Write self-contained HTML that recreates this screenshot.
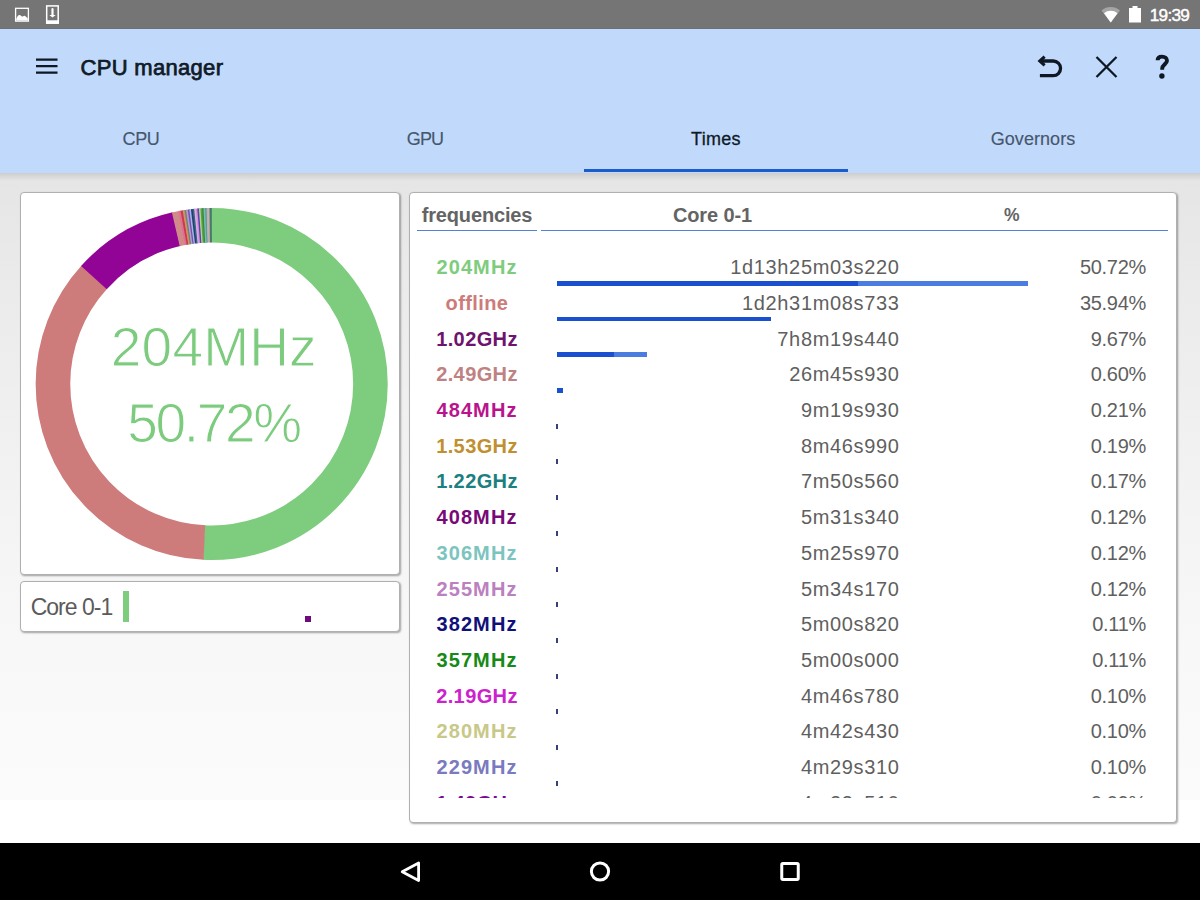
<!DOCTYPE html>
<html><head><meta charset="utf-8"><style>
html,body{margin:0;padding:0;width:1200px;height:900px;overflow:hidden;background:#fff;}
body{position:relative;font-family:"Liberation Sans",sans-serif;}
.t{position:absolute;white-space:nowrap;}
.abs{position:absolute;}
</style></head><body>

<div class="abs" style="left:0;top:0;width:1200px;height:28px;background:#757575"></div>
<div class="abs" style="left:0;top:28px;width:1200px;height:145px;background:#c1dafc"></div>
<div class="abs" style="left:0;top:28px;width:1200px;height:1px;background:#66727c"></div>
<div class="abs" style="left:0;top:173px;width:1200px;height:627px;background:linear-gradient(#e5e5e5 0px,#ebebeb 120px,#f2f2f2 300px,#f8f8f8 470px,#fbfbfb 627px)"></div>
<div class="abs" style="left:0;top:173px;width:1200px;height:8px;background:linear-gradient(rgba(0,0,0,0.10),rgba(0,0,0,0))"></div>
<div class="abs" style="left:0;top:843px;width:1200px;height:57px;background:#000"></div>
<div class="abs" style="left:584px;top:169px;width:264px;height:3px;background:#1a5cc9"></div>
<svg class="abs" style="left:0;top:0" width="1200" height="28">
<rect x="15.6" y="8.3" width="12.8" height="12.8" fill="none" stroke="#fff" stroke-width="1.3"/>
<path d="M16.3 20.5 L16.3 19 C17 17 18 15 19.6 15 C20.8 15 21.2 16.6 22.2 16.6 C23 16.6 23.5 15.8 24.3 15.8 C25.5 15.8 26.5 17.5 27.7 18 L27.7 20.5 Z" fill="#fff"/>
<rect x="46.7" y="5.9" width="11.5" height="17.2" fill="none" stroke="#fff" stroke-width="1.5"/>
<rect x="46" y="20.3" width="13" height="3.5" fill="#fff"/>
<path d="M52.5 9 V15" stroke="#fff" stroke-width="2.2" stroke-linecap="round"/>
<path d="M49.3 15 L55.7 15 L52.5 17.6 Z" fill="#fff"/>
<path d="M1101.5 10.5 A14 14 0 0 1 1120 10.5 L1110.75 22.5 Z" fill="rgba(255,255,255,0.35)"/>
<path d="M1104 13.2 A10.5 10.5 0 0 1 1117.5 13.2 L1110.75 22.5 Z" fill="#fff"/>
<rect x="1129" y="8" width="12" height="14.5" fill="#fff"/>
<rect x="1132.5" y="6" width="5" height="2.5" fill="#fff"/>
</svg>
<div class="t" style="left:1149.8px;top:5.12px;font-size:17.2px;line-height:20.64px;color:#fff;font-weight:400;letter-spacing:-0.75px;-webkit-text-stroke:0.45px #fff;">19:39</div>
<svg class="abs" style="left:0;top:28px" width="1200" height="60">
<g stroke="#0f1722" stroke-width="2.2">
<path d="M36 31.6 H57.5 M36 38.1 H57.5 M36 44.6 H57.5"/>
</g>
</svg>
<div class="t" style="left:80.6px;top:54.68px;font-size:22px;line-height:26.40px;color:#111a26;font-weight:400;letter-spacing:0.3px;-webkit-text-stroke:0.75px #111a26;">CPU manager</div>
<svg class="abs" style="left:1020px;top:40px" width="170" height="50">
<g fill="none" stroke="#0f1722">
<path d="M19.9 35.7 H33.2 A7.35 7.35 0 0 0 33.2 21 H20.5" stroke-width="3.3"/>
<path d="M24.6 16.6 L19.8 21 L24.6 25.4" stroke-width="3.1"/>
<path d="M76.5 17 L96.5 37 M96.5 17 L76.5 37" stroke-width="2.3"/>
<path d="M137.6 20.3 C137.6 17.6 139.3 16.6 142 16.6 C145 16.6 147 18.3 147 20.8 C147 23.6 142.2 25 142.2 28.4 V29.7" stroke-width="3.9"/>
</g>
<circle cx="141.9" cy="36" r="2.7" fill="#0f1722"/>
</svg>
<div class="t" style="left:-159px;width:600px;text-align:center;top:128.66px;font-size:18px;line-height:21.60px;color:#46566c;font-weight:400;letter-spacing:-0.3px;-webkit-text-stroke:0.15px #46566c;">CPU</div>
<div class="t" style="left:125px;width:600px;text-align:center;top:128.66px;font-size:18px;line-height:21.60px;color:#46566c;font-weight:400;letter-spacing:-0.8px;-webkit-text-stroke:0.15px #46566c;">GPU</div>
<div class="t" style="left:416px;width:600px;text-align:center;top:128.66px;font-size:18px;line-height:21.60px;color:#0f1a28;font-weight:400;letter-spacing:0.3px;-webkit-text-stroke:0.3px #0f1a28;">Times</div>
<div class="t" style="left:733px;width:600px;text-align:center;top:128.66px;font-size:18px;line-height:21.60px;color:#46566c;font-weight:400;letter-spacing:0.05px;-webkit-text-stroke:0.15px #46566c;">Governors</div>
<div class="abs" style="left:20px;top:192px;width:380px;height:383px;box-sizing:border-box;border:1px solid #b0b0b0;border-radius:4px;background:#fff;box-shadow:1px 1px 2px rgba(0,0,0,0.35)"></div>
<div class="abs" style="left:20px;top:581px;width:380px;height:51px;box-sizing:border-box;border:1px solid #b0b0b0;border-radius:4px;background:#fff;box-shadow:1px 1px 2px rgba(0,0,0,0.35)"></div>
<div class="abs" style="left:409px;top:192px;width:768px;height:631px;box-sizing:border-box;border:1px solid #b0b0b0;border-radius:4px;background:#fff;box-shadow:1px 1px 2px rgba(0,0,0,0.35)"></div>
<svg class="abs" style="left:0;top:0" width="1200" height="900"><g transform="rotate(-90 211.7 384)"><circle cx="211.7" cy="384" r="158.75" fill="none" stroke="#7ecc7e" stroke-width="34.6" stroke-dasharray="506.510 997.456" stroke-dashoffset="0.000"/><circle cx="211.7" cy="384" r="158.75" fill="none" stroke="#cd7b7b" stroke-width="34.6" stroke-dasharray="359.086 997.456" stroke-dashoffset="-505.910"/><circle cx="211.7" cy="384" r="158.75" fill="none" stroke="#920496" stroke-width="34.6" stroke-dasharray="97.054 997.456" stroke-dashoffset="-864.395"/><circle cx="211.7" cy="384" r="158.75" fill="none" stroke="#d08a8a" stroke-width="34.6" stroke-dasharray="6.488 997.456" stroke-dashoffset="-960.849"/><circle cx="211.7" cy="384" r="158.75" fill="none" stroke="#e07090" stroke-width="34.6" stroke-dasharray="2.661 997.456" stroke-dashoffset="-966.738"/><circle cx="211.7" cy="384" r="158.75" fill="none" stroke="#c83a50" stroke-width="34.6" stroke-dasharray="2.465 997.456" stroke-dashoffset="-968.798"/><circle cx="211.7" cy="384" r="158.75" fill="none" stroke="#d89060" stroke-width="34.6" stroke-dasharray="2.268 997.456" stroke-dashoffset="-970.663"/><circle cx="211.7" cy="384" r="158.75" fill="none" stroke="#6a8a6a" stroke-width="34.6" stroke-dasharray="2.072 997.456" stroke-dashoffset="-972.332"/><circle cx="211.7" cy="384" r="158.75" fill="none" stroke="#b898d8" stroke-width="34.6" stroke-dasharray="2.072 997.456" stroke-dashoffset="-973.804"/><circle cx="211.7" cy="384" r="158.75" fill="none" stroke="#7a50b0" stroke-width="34.6" stroke-dasharray="2.072 997.456" stroke-dashoffset="-975.276"/><circle cx="211.7" cy="384" r="158.75" fill="none" stroke="#a0b8e8" stroke-width="34.6" stroke-dasharray="2.072 997.456" stroke-dashoffset="-976.748"/><circle cx="211.7" cy="384" r="158.75" fill="none" stroke="#2a3a70" stroke-width="34.6" stroke-dasharray="2.072 997.456" stroke-dashoffset="-978.220"/><circle cx="211.7" cy="384" r="158.75" fill="none" stroke="#2a6a80" stroke-width="34.6" stroke-dasharray="2.072 997.456" stroke-dashoffset="-979.692"/><circle cx="211.7" cy="384" r="158.75" fill="none" stroke="#e0a8e8" stroke-width="34.6" stroke-dasharray="2.072 997.456" stroke-dashoffset="-981.164"/><circle cx="211.7" cy="384" r="158.75" fill="none" stroke="#d090d8" stroke-width="34.6" stroke-dasharray="1.974 997.456" stroke-dashoffset="-982.636"/><circle cx="211.7" cy="384" r="158.75" fill="none" stroke="#6040b0" stroke-width="34.6" stroke-dasharray="2.072 997.456" stroke-dashoffset="-984.010"/><circle cx="211.7" cy="384" r="158.75" fill="none" stroke="#a8d890" stroke-width="34.6" stroke-dasharray="1.974 997.456" stroke-dashoffset="-985.482"/><circle cx="211.7" cy="384" r="158.75" fill="none" stroke="#60a040" stroke-width="34.6" stroke-dasharray="1.974 997.456" stroke-dashoffset="-986.856"/><circle cx="211.7" cy="384" r="158.75" fill="none" stroke="#3a8a3a" stroke-width="34.6" stroke-dasharray="1.974 997.456" stroke-dashoffset="-988.230"/><circle cx="211.7" cy="384" r="158.75" fill="none" stroke="#70c0b0" stroke-width="34.6" stroke-dasharray="1.974 997.456" stroke-dashoffset="-989.604"/><circle cx="211.7" cy="384" r="158.75" fill="none" stroke="#50a0a0" stroke-width="34.6" stroke-dasharray="1.974 997.456" stroke-dashoffset="-990.978"/><circle cx="211.7" cy="384" r="158.75" fill="none" stroke="#d0a8a8" stroke-width="34.6" stroke-dasharray="1.974 997.456" stroke-dashoffset="-992.352"/><circle cx="211.7" cy="384" r="158.75" fill="none" stroke="#c8b0b0" stroke-width="34.6" stroke-dasharray="1.876 997.456" stroke-dashoffset="-993.726"/><circle cx="211.7" cy="384" r="158.75" fill="none" stroke="#4a7a6a" stroke-width="34.6" stroke-dasharray="1.876 997.456" stroke-dashoffset="-995.002"/><circle cx="211.7" cy="384" r="158.75" fill="none" stroke="#2a7a5a" stroke-width="34.6" stroke-dasharray="1.778 997.456" stroke-dashoffset="-996.278"/></g></svg>
<div class="t" style="left:-86.19999999999999px;width:600px;text-align:center;top:314.14px;font-size:55px;line-height:66.00px;color:#7dcb7e;font-weight:400;letter-spacing:0.2px;-webkit-text-stroke:1px #fff;">204MHz</div>
<div class="t" style="left:-86.5px;width:600px;text-align:center;top:390.24px;font-size:55px;line-height:66.00px;color:#7dcb7e;font-weight:400;letter-spacing:-2.3px;-webkit-text-stroke:1px #fff;">50.72%</div>
<div class="t" style="left:30.7px;top:593.83px;font-size:23px;line-height:27.60px;color:#5b5b5b;font-weight:400;letter-spacing:-1.0px;">Core 0-1</div>
<div class="abs" style="left:123px;top:591px;width:6px;height:31px;background:#7ecc7e"></div>
<div class="abs" style="left:305px;top:616px;width:6px;height:6px;background:#6e0a7a"></div>
<div class="t" style="left:177px;width:600px;text-align:center;top:202.77px;font-size:20px;line-height:24.00px;color:#646464;font-weight:700;letter-spacing:-0.15px;">frequencies</div>
<div class="t" style="left:412.5px;width:600px;text-align:center;top:203.07px;font-size:20px;line-height:24.00px;color:#646464;font-weight:700;letter-spacing:-0.1px;">Core 0-1</div>
<div class="t" style="left:711.7px;width:600px;text-align:center;top:205.14px;font-size:17.5px;line-height:21.00px;color:#646464;font-weight:700;letter-spacing:0px;">%</div>
<div class="abs" style="left:417px;top:230px;width:120px;height:1.2px;background:#5580d8"></div>
<div class="abs" style="left:541px;top:230px;width:627px;height:1.2px;background:#5580d8"></div>
<div class="abs" style="left:410px;top:240px;width:766px;height:557.6px;overflow:hidden">
<div class="t" style="left:-233px;width:600px;text-align:center;top:15.07px;font-size:20px;line-height:24.00px;color:#7ecc7e;font-weight:700;letter-spacing:1.1px;">204MHz</div>
<div class="t" style="right:276.5px;text-align:right;top:15.07px;font-size:20px;line-height:24.00px;color:#5f5f5f;font-weight:400;letter-spacing:0.65px;">1d13h25m03s220</div>
<div class="t" style="right:30px;text-align:right;top:15.07px;font-size:20px;line-height:24.00px;color:#5f5f5f;font-weight:400;letter-spacing:-0.3px;">50.72%</div>
<div class="abs" style="left:146.5px;top:41.00px;width:471px;height:4.5px;background:#4a7ddf"></div>
<div class="abs" style="left:146.5px;top:41.00px;width:301px;height:4.5px;background:#1a4fcf"></div>
<div class="t" style="left:-233px;width:600px;text-align:center;top:50.78px;font-size:20px;line-height:24.00px;color:#cd7b7b;font-weight:700;letter-spacing:0.4px;">offline</div>
<div class="t" style="right:276.5px;text-align:right;top:50.78px;font-size:20px;line-height:24.00px;color:#5f5f5f;font-weight:400;letter-spacing:0.65px;">1d2h31m08s733</div>
<div class="t" style="right:30px;text-align:right;top:50.78px;font-size:20px;line-height:24.00px;color:#5f5f5f;font-weight:400;letter-spacing:-0.3px;">35.94%</div>
<div class="abs" style="left:146.5px;top:76.71px;width:214px;height:4.5px;background:#1a4fcf"></div>
<div class="t" style="left:-233px;width:600px;text-align:center;top:86.50px;font-size:20px;line-height:24.00px;color:#6e146e;font-weight:700;letter-spacing:0.4px;">1.02GHz</div>
<div class="t" style="right:276.5px;text-align:right;top:86.50px;font-size:20px;line-height:24.00px;color:#5f5f5f;font-weight:400;letter-spacing:0.65px;">7h8m19s440</div>
<div class="t" style="right:30px;text-align:right;top:86.50px;font-size:20px;line-height:24.00px;color:#5f5f5f;font-weight:400;letter-spacing:-0.3px;">9.67%</div>
<div class="abs" style="left:146.5px;top:112.43px;width:90.5px;height:4.5px;background:#4a7ddf"></div>
<div class="abs" style="left:146.5px;top:112.43px;width:57.5px;height:4.5px;background:#1a4fcf"></div>
<div class="t" style="left:-233px;width:600px;text-align:center;top:122.21px;font-size:20px;line-height:24.00px;color:#be8282;font-weight:700;letter-spacing:0.4px;">2.49GHz</div>
<div class="t" style="right:276.5px;text-align:right;top:122.21px;font-size:20px;line-height:24.00px;color:#5f5f5f;font-weight:400;letter-spacing:0.65px;">26m45s930</div>
<div class="t" style="right:30px;text-align:right;top:122.21px;font-size:20px;line-height:24.00px;color:#5f5f5f;font-weight:400;letter-spacing:-0.3px;">0.60%</div>
<div class="abs" style="left:146.5px;top:148.14px;width:6px;height:4.5px;background:#1a4fcf"></div>
<div class="t" style="left:-233px;width:600px;text-align:center;top:157.93px;font-size:20px;line-height:24.00px;color:#b9148c;font-weight:700;letter-spacing:1.1px;">484MHz</div>
<div class="t" style="right:276.5px;text-align:right;top:157.93px;font-size:20px;line-height:24.00px;color:#5f5f5f;font-weight:400;letter-spacing:0.65px;">9m19s930</div>
<div class="t" style="right:30px;text-align:right;top:157.93px;font-size:20px;line-height:24.00px;color:#5f5f5f;font-weight:400;letter-spacing:-0.3px;">0.21%</div>
<div class="abs" style="left:146.20000000000005px;top:183.66px;width:2.2px;height:5px;background:#36407a"></div>
<div class="t" style="left:-233px;width:600px;text-align:center;top:193.64px;font-size:20px;line-height:24.00px;color:#c09030;font-weight:700;letter-spacing:0.4px;">1.53GHz</div>
<div class="t" style="right:276.5px;text-align:right;top:193.64px;font-size:20px;line-height:24.00px;color:#5f5f5f;font-weight:400;letter-spacing:0.65px;">8m46s990</div>
<div class="t" style="right:30px;text-align:right;top:193.64px;font-size:20px;line-height:24.00px;color:#5f5f5f;font-weight:400;letter-spacing:-0.3px;">0.19%</div>
<div class="abs" style="left:146.20000000000005px;top:219.37px;width:2.2px;height:5px;background:#36407a"></div>
<div class="t" style="left:-233px;width:600px;text-align:center;top:229.35px;font-size:20px;line-height:24.00px;color:#1a8080;font-weight:700;letter-spacing:0.4px;">1.22GHz</div>
<div class="t" style="right:276.5px;text-align:right;top:229.35px;font-size:20px;line-height:24.00px;color:#5f5f5f;font-weight:400;letter-spacing:0.65px;">7m50s560</div>
<div class="t" style="right:30px;text-align:right;top:229.35px;font-size:20px;line-height:24.00px;color:#5f5f5f;font-weight:400;letter-spacing:-0.3px;">0.17%</div>
<div class="abs" style="left:146.20000000000005px;top:255.08px;width:2px;height:5px;background:#36407a"></div>
<div class="t" style="left:-233px;width:600px;text-align:center;top:265.07px;font-size:20px;line-height:24.00px;color:#780a78;font-weight:700;letter-spacing:1.1px;">408MHz</div>
<div class="t" style="right:276.5px;text-align:right;top:265.07px;font-size:20px;line-height:24.00px;color:#5f5f5f;font-weight:400;letter-spacing:0.65px;">5m31s340</div>
<div class="t" style="right:30px;text-align:right;top:265.07px;font-size:20px;line-height:24.00px;color:#5f5f5f;font-weight:400;letter-spacing:-0.3px;">0.12%</div>
<div class="abs" style="left:146.20000000000005px;top:290.80px;width:2px;height:5px;background:#36407a"></div>
<div class="t" style="left:-233px;width:600px;text-align:center;top:300.78px;font-size:20px;line-height:24.00px;color:#7cc4c0;font-weight:700;letter-spacing:1.1px;">306MHz</div>
<div class="t" style="right:276.5px;text-align:right;top:300.78px;font-size:20px;line-height:24.00px;color:#5f5f5f;font-weight:400;letter-spacing:0.65px;">5m25s970</div>
<div class="t" style="right:30px;text-align:right;top:300.78px;font-size:20px;line-height:24.00px;color:#5f5f5f;font-weight:400;letter-spacing:-0.3px;">0.12%</div>
<div class="abs" style="left:146.20000000000005px;top:326.51px;width:2px;height:5px;background:#36407a"></div>
<div class="t" style="left:-233px;width:600px;text-align:center;top:336.50px;font-size:20px;line-height:24.00px;color:#bb80c0;font-weight:700;letter-spacing:1.1px;">255MHz</div>
<div class="t" style="right:276.5px;text-align:right;top:336.50px;font-size:20px;line-height:24.00px;color:#5f5f5f;font-weight:400;letter-spacing:0.65px;">5m34s170</div>
<div class="t" style="right:30px;text-align:right;top:336.50px;font-size:20px;line-height:24.00px;color:#5f5f5f;font-weight:400;letter-spacing:-0.3px;">0.12%</div>
<div class="abs" style="left:146.20000000000005px;top:362.23px;width:2px;height:5px;background:#36407a"></div>
<div class="t" style="left:-233px;width:600px;text-align:center;top:372.21px;font-size:20px;line-height:24.00px;color:#10107a;font-weight:700;letter-spacing:1.1px;">382MHz</div>
<div class="t" style="right:276.5px;text-align:right;top:372.21px;font-size:20px;line-height:24.00px;color:#5f5f5f;font-weight:400;letter-spacing:0.65px;">5m00s820</div>
<div class="t" style="right:30px;text-align:right;top:372.21px;font-size:20px;line-height:24.00px;color:#5f5f5f;font-weight:400;letter-spacing:-0.3px;">0.11%</div>
<div class="abs" style="left:146.20000000000005px;top:397.94px;width:2px;height:5px;background:#36407a"></div>
<div class="t" style="left:-233px;width:600px;text-align:center;top:407.92px;font-size:20px;line-height:24.00px;color:#168a16;font-weight:700;letter-spacing:1.1px;">357MHz</div>
<div class="t" style="right:276.5px;text-align:right;top:407.92px;font-size:20px;line-height:24.00px;color:#5f5f5f;font-weight:400;letter-spacing:0.65px;">5m00s000</div>
<div class="t" style="right:30px;text-align:right;top:407.92px;font-size:20px;line-height:24.00px;color:#5f5f5f;font-weight:400;letter-spacing:-0.3px;">0.11%</div>
<div class="abs" style="left:146.20000000000005px;top:433.65px;width:2px;height:5px;background:#36407a"></div>
<div class="t" style="left:-233px;width:600px;text-align:center;top:443.64px;font-size:20px;line-height:24.00px;color:#cc22cc;font-weight:700;letter-spacing:0.4px;">2.19GHz</div>
<div class="t" style="right:276.5px;text-align:right;top:443.64px;font-size:20px;line-height:24.00px;color:#5f5f5f;font-weight:400;letter-spacing:0.65px;">4m46s780</div>
<div class="t" style="right:30px;text-align:right;top:443.64px;font-size:20px;line-height:24.00px;color:#5f5f5f;font-weight:400;letter-spacing:-0.3px;">0.10%</div>
<div class="abs" style="left:146.20000000000005px;top:469.37px;width:2px;height:5px;background:#36407a"></div>
<div class="t" style="left:-233px;width:600px;text-align:center;top:479.35px;font-size:20px;line-height:24.00px;color:#c8c888;font-weight:700;letter-spacing:1.1px;">280MHz</div>
<div class="t" style="right:276.5px;text-align:right;top:479.35px;font-size:20px;line-height:24.00px;color:#5f5f5f;font-weight:400;letter-spacing:0.65px;">4m42s430</div>
<div class="t" style="right:30px;text-align:right;top:479.35px;font-size:20px;line-height:24.00px;color:#5f5f5f;font-weight:400;letter-spacing:-0.3px;">0.10%</div>
<div class="abs" style="left:146.20000000000005px;top:505.08px;width:2px;height:5px;background:#36407a"></div>
<div class="t" style="left:-233px;width:600px;text-align:center;top:515.07px;font-size:20px;line-height:24.00px;color:#7a7ac0;font-weight:700;letter-spacing:1.1px;">229MHz</div>
<div class="t" style="right:276.5px;text-align:right;top:515.07px;font-size:20px;line-height:24.00px;color:#5f5f5f;font-weight:400;letter-spacing:0.65px;">4m29s310</div>
<div class="t" style="right:30px;text-align:right;top:515.07px;font-size:20px;line-height:24.00px;color:#5f5f5f;font-weight:400;letter-spacing:-0.3px;">0.10%</div>
<div class="abs" style="left:146.20000000000005px;top:540.80px;width:2px;height:5px;background:#36407a"></div>
<div class="t" style="left:-233px;width:600px;text-align:center;top:550.78px;font-size:20px;line-height:24.00px;color:#7a0a9a;font-weight:700;letter-spacing:0.4px;">1.49GHz</div>
<div class="t" style="right:276.5px;text-align:right;top:550.78px;font-size:20px;line-height:24.00px;color:#5f5f5f;font-weight:400;letter-spacing:0.65px;">4m23s510</div>
<div class="t" style="right:30px;text-align:right;top:550.78px;font-size:20px;line-height:24.00px;color:#5f5f5f;font-weight:400;letter-spacing:-0.3px;">0.09%</div>
<div class="abs" style="left:146.20000000000005px;top:576.51px;width:2px;height:5px;background:#36407a"></div>
</div>
<svg class="abs" style="left:0;top:843px" width="1200" height="57">
<path d="M418.6 20 L418.6 37.6 L402.2 28.8 Z" fill="none" stroke="#fff" stroke-width="2.8" stroke-linejoin="round"/>
<circle cx="600" cy="28.5" r="8.6" fill="none" stroke="#fff" stroke-width="3"/>
<rect x="781.75" y="20.5" width="16.5" height="16" rx="1.2" fill="none" stroke="#fff" stroke-width="3"/>
</svg>
</body></html>
